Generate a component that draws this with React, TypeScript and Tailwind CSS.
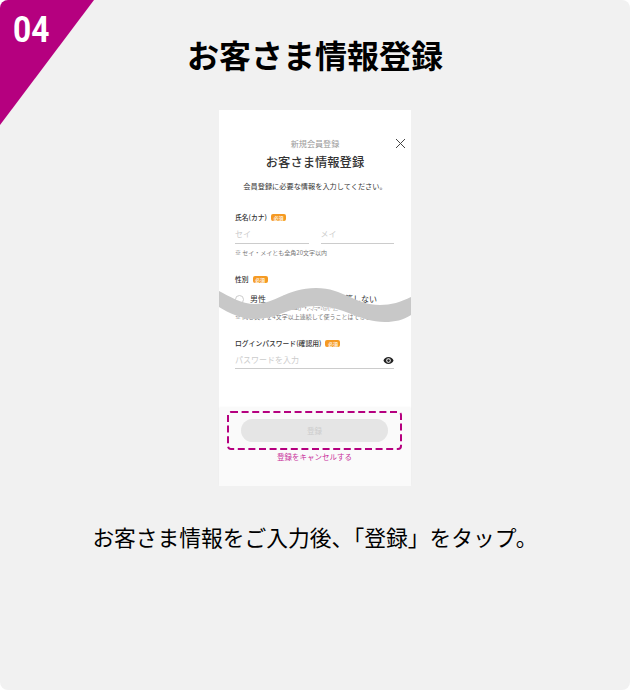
const jp = "font-['Noto_Sans_CJK_JP','Noto_Sans',sans-serif]";

function Badge() {
  return (
    <span className="inline-flex h-[7px] w-[15px] items-center justify-center rounded-[2px] bg-[#f59a23] text-[5px] leading-none text-white">
      必須
    </span>
  );
}

function Label({ children }: { children: React.ReactNode }) {
  return (
    <div className="flex h-[10px] items-center gap-[4px] whitespace-nowrap text-[6.8px] font-medium leading-none text-[#333]">
      <span>{children}</span>
      <Badge />
    </div>
  );
}

export default function App() {
  return (
    <div className={`relative flex h-[690px] w-[630px] flex-col items-center overflow-hidden rounded-[8px] bg-[#f1f1f1] ${jp}`}>
      <svg className="absolute left-0 top-0" width="94" height="125" viewBox="0 0 94 125">
        <polygon points="0,0 94,0 0,125" fill="#b5007f" />
      </svg>
      <span className="absolute left-[13px] top-[9px] origin-left scale-x-[0.88] font-['Roboto',sans-serif] text-[36px] font-bold leading-[42px] text-white">04</span>

      <h1 className="mt-[34px] h-[40px] text-[32px] font-bold leading-[40px] text-black">お客さま情報登録</h1>

      <div className="relative mt-[36px] flex h-[376px] w-[192px] flex-col bg-white">
        <div className="flex flex-col items-center pt-[28px]">
          <div className="h-[12px] text-[8.1px] leading-[12px] text-[#999]">新規会員登録</div>
          <div className="mt-[3px] h-[18px] text-[12.3px] font-medium leading-[18px] text-[#333]">お客さま情報登録</div>
          <div className="mt-[9px] h-[12px] text-[7.2px] leading-[12px] text-[#333]">会員登録に必要な情報を入力してください。</div>
        </div>

        <svg className="absolute left-[176px] top-[28px]" width="11" height="11" viewBox="0 0 11 11">
          <path d="M1 1l9 9M10 1l-9 9" stroke="#444" strokeWidth="1" fill="none" />
        </svg>

        <div className="flex flex-col pl-[16px] pr-[17px] pt-[20px]">
          <Label>氏名(カナ)</Label>
          <div className="mt-[3px] flex gap-[12px]">
            <div className="h-[19px] w-[74px] border-b border-[#ccc] text-[8px] leading-[17px] text-[#ccc]">セイ</div>
            <div className="h-[19px] w-[74px] border-b border-[#ccc] text-[8px] leading-[17px] text-[#ccc]">メイ</div>
          </div>
          <div className="mt-[4px] h-[10px] text-[6px] leading-[10px] text-[#777]">※ セイ・メイとも全角20文字以内</div>

          <div className="mt-[16px]"><Label>性別</Label></div>
          <div className="mt-[9px] flex h-[12px] items-center whitespace-nowrap text-[8px] leading-none text-[#333]">
            <span className="h-[9px] w-[9px] shrink-0 rounded-full border border-[#ccc]" />
            <span className="ml-[6px] shrink-0">男性</span>
            <span className="ml-[15px] h-[9px] w-[9px] shrink-0 rounded-full border border-[#ccc]" />
            <span className="ml-[47px] shrink-0">回答しない</span>
          </div>
          <div className="h-[7px] whitespace-nowrap pl-[46px] text-[5.5px] leading-[7px] text-[#777]">!#$%&amp;()*+,-./:;=?@[^]_</div>
          <div className="h-[9px] whitespace-nowrap text-[6px] leading-[9px] text-[#777]">※ 同じ文字を4文字以上連続して使うことはできません</div>

          <div className="mt-[17px]"><Label>ログインパスワード(確認用)</Label></div>
          <div className="mt-[4px] flex h-[17px] items-center justify-between border-b border-[#ccc] text-[8px] text-[#ccc]">
            <span>パスワードを入力</span>
            <svg width="11" height="11" viewBox="0 0 24 24" fill="#222">
              <path d="M12 4.5C7 4.5 2.7 7.6 1 12c1.7 4.4 6 7.5 11 7.5s9.3-3.1 11-7.5c-1.7-4.4-6-7.5-11-7.5zm0 12.5a5 5 0 1 1 0-10 5 5 0 0 1 0 10zm0-8a3 3 0 1 0 0 6 3 3 0 0 0 0-6z" />
            </svg>
          </div>
        </div>

        <div className="mt-auto flex h-[78px] flex-col items-center bg-[#fafafa] pr-[1px] pt-[11px] shadow-[0_-1px_2px_rgba(0,0,0,0.03)]">
          <div className="flex h-[23px] w-[147px] items-center justify-center rounded-full bg-[#e5e5e5] text-[7.5px] text-[#ccc]">登録</div>
          <div className="mt-[9px] h-[12px] text-[7.5px] leading-[12px] text-[#c9309b]">登録をキャンセルする</div>
        </div>

        <svg className="absolute left-0 top-[176px]" width="192" height="38" viewBox="0 0 192 38">
          <path d="M0 5C10 10 22 18 36 18C56 18 68 2 97 2C125 2 135 19 161 19C172 19 182 16 192 11V29C184 34 176 36 166 36C140 36 125 20 97 20C72 20 58 33 36 33C22 33 10 27 0 21Z" fill="#c8c8c8" />
        </svg>

        <svg className="absolute left-[8px] top-[301px]" width="175" height="39" viewBox="0 0 175 39">
          <rect x="1" y="1" width="173" height="37" rx="3" fill="none" stroke="#b5007f" strokeWidth="2" strokeDasharray="7 3.6" />
        </svg>
      </div>

      <p className="mt-[32px] h-[38px] text-[21.75px] leading-[38px] text-black">お客さま情報をご入力後、「登録」をタップ。</p>
    </div>
  );
}
